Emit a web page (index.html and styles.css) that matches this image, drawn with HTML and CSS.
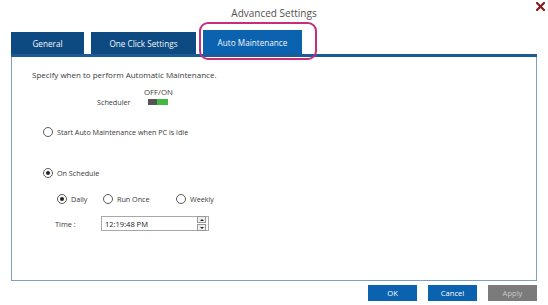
FILE: index.html
```html
<!DOCTYPE html>
<html lang="en">
<head>
    <meta charset="UTF-8">
    <meta name="viewport" content="width=device-width, initial-scale=1.0">
    <title>Advanced Settings</title>

    <link rel="stylesheet" href="styles.css">

</head>
<body>
    <div class="dialog">
        <header class="titlebar">
            <span class="title">Advanced Settings</span>
            <span class="close">
                <svg width="9" height="9" viewBox="0 0 9 9">
                    <path d="M1 1 L8 8 M8 1 L1 8" stroke="#8a1c1c" stroke-width="2.2" stroke-linecap="square"/>
                </svg>
            </span>
        </header>

        <nav class="tabs">
            <div class="tab general">General</div>
            <div class="tab oneclick">One Click Settings</div>
            <div class="tab auto">Auto Maintenance</div>
            <div class="highlight"></div>
        </nav>

        <section class="panel">
            <p class="intro">Specify when to perform Automatic Maintenance.</p>

            <div class="scheduler">
                <span class="sched-label">Scheduler</span>
                <div class="switch-wrap">
                    <span class="switch-text">OFF/ON</span>
                    <span class="switch"><i class="off"></i><i class="on"></i></span>
                </div>
            </div>

            <div class="radio idle">
                <span class="dot"></span>
                Start Auto Maintenance when PC is idle
            </div>

            <div class="radio schedule">
                <span class="dot checked"></span>
                On Schedule
            </div>

            <div class="freq">
                <div class="radio daily">
                    <span class="dot checked"></span>
                    Daily
                </div>
                <div class="radio runonce">
                    <span class="dot"></span>
                    Run Once
                </div>
                <div class="radio">
                    <span class="dot"></span>
                    Weekly
                </div>
            </div>

            <div class="time-row">
                <span class="time-label">Time :</span>
                <div class="time-box">
                    <span class="time-value">12:19:48 PM</span>
                    <span class="spin">
                        <span class="spin-btn"><i class="up"></i></span>
                        <span class="spin-btn"><i class="down"></i></span>
                    </span>
                </div>
            </div>
        </section>

        <footer class="actions">
            <button class="btn">OK</button>
            <button class="btn">Cancel</button>
            <button class="btn disabled">Apply</button>
        </footer>
    </div>
</body>
</html>
```

FILE: styles.css
```css
body
{
    margin: 0;
    background-color: #fff;
    font-family: "Open Sans", "Noto Sans", sans-serif;
    color: #3a3a3a;
}
.dialog
{
    width: 548px;
    height: 305px;
}
.titlebar
{
    height: 26px;
    padding-bottom: 2px;
    display: flex;
    justify-content: center;
    align-items: center;
    position: relative;
}
.title
{
    font-size: 10px;
    color: #505050;
}
.close
{
    position: absolute;
    right: 3px;
    top: 2px;
    line-height: 0;
}

/* tabs */
.tabs
{
    display: flex;
    align-items: flex-end;
    gap: 7px;
    margin: 0 11px;
    height: 26px;
    border-bottom: 3px solid #1b5c98;
    position: relative;
}
.tab
{
    height: 22px;
    display: flex;
    justify-content: center;
    align-items: center;
    background-color: #0e4a82;
    color: #f2f6fa;
    font-size: 8.2px;
}
.tab.general
{
    width: 73px;
}
.tab.oneclick
{
    width: 105px;
}
.tab.auto
{
    width: 99px;
    height: 24px;
    background-color: #0b63b0;
}
.highlight
{
    position: absolute;
    left: 188px;
    top: -6px;
    width: 114px;
    height: 34px;
    border: 2px solid #c42e7d;
    border-radius: 9px;
}

/* panel */
.panel
{
    margin: 0 11px;
    height: 224px;
    box-sizing: border-box;
    border: 1px solid #7f9fc0;
    border-top: none;
    padding: 12px 0 0 20px;
}
.intro
{
    margin: 0;
    font-size: 8px;
    line-height: 12px;
}
.scheduler
{
    display: flex;
    align-items: flex-end;
    gap: 13px;
    margin: 6px 0 0 65px;
}
.sched-label
{
    font-size: 7.2px;
    line-height: 6px;
}
.switch-wrap
{
    display: flex;
    flex-direction: column;
    align-items: center;
    width: 30px;
}
.switch-text
{
    font-size: 7.8px;
    line-height: 10px;
}
.switch
{
    display: flex;
    width: 20px;
    height: 6px;
    margin-top: 2px;
}
.switch .off
{
    width: 9px;
    background-color: #555;
}
.switch .on
{
    flex: 1;
    background-color: #3fb93f;
}

/* radios */
.radio
{
    display: flex;
    align-items: center;
    gap: 4px;
    font-size: 7.2px;
    line-height: 10px;
}
.radio.idle
{
    margin: 22px 0 0 11px;
}
.radio.schedule
{
    margin: 31px 0 0 11px;
}
.dot
{
    width: 8px;
    height: 8px;
    border: 1px solid #5a5a5a;
    border-radius: 50%;
    display: flex;
    justify-content: center;
    align-items: center;
}
.dot.checked::after
{
    content: "";
    width: 4px;
    height: 4px;
    border-radius: 50%;
    background-color: #222;
}
.freq
{
    display: flex;
    margin: 16px 0 0 25px;
}
.freq .daily
{
    width: 46px;
}
.freq .runonce
{
    width: 73px;
}

/* time */
.time-row
{
    display: flex;
    align-items: center;
    margin: 12px 0 0 23px;
}
.time-label
{
    font-size: 7.4px;
    width: 46px;
}
.time-box
{
    width: 108px;
    height: 15px;
    box-sizing: border-box;
    border: 1px solid #a8a8a8;
    display: flex;
    align-items: center;
    justify-content: space-between;
    padding: 0 2px 0 3px;
}
.time-value
{
    font-size: 7.5px;
    color: #222;
}
.spin
{
    display: flex;
    flex-direction: column;
    gap: 1px;
}
.spin-btn
{
    width: 7px;
    height: 5px;
    border: 1px solid #999;
    background-color: #eee;
    display: flex;
    justify-content: center;
    align-items: center;
}
.spin-btn i
{
    width: 0;
    height: 0;
    border-left: 2px solid transparent;
    border-right: 2px solid transparent;
}
.spin-btn .up
{
    border-bottom: 2px solid #222;
}
.spin-btn .down
{
    border-top: 2px solid #222;
}

/* buttons */
.actions
{
    display: flex;
    justify-content: flex-end;
    gap: 11px;
    margin: 4px 11px 0 0;
}
.btn
{
    width: 49px;
    height: 16px;
    padding: 0;
    border: none;
    background-color: #0b62ae;
    color: #fff;
    font-family: "Open Sans", "Noto Sans", sans-serif;
    font-size: 7.6px;
    cursor: pointer;
}
.btn.disabled
{
    background-color: #7b7b7b;
    color: #c8c8c8;
}
```
